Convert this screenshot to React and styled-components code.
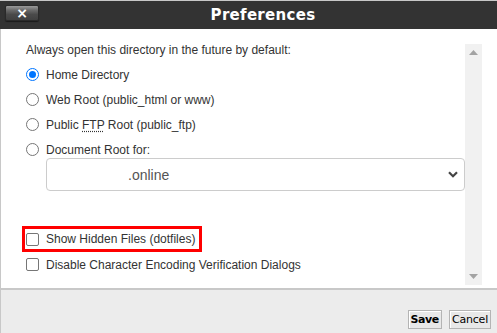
import React from "react";
import styled, { createGlobalStyle } from "styled-components";

const Global = createGlobalStyle`
  html, body { margin: 0; padding: 0; background: #fff; }
  body { font-family: "Liberation Sans", Arial, sans-serif; }
  * { box-sizing: border-box; }
`;

const Dialog = styled.div`
  width: 497px;
  height: 333px;
  display: flex;
  flex-direction: column;
  border-top: 1px solid #c8c8c8;
  overflow: hidden;
`;

const Header = styled.div`
  height: 28px;
  background: #333333;
  display: flex;
  align-items: center;
  padding: 0 0 0 5px;
  flex: none;
`;

const CloseButton = styled.button`
  width: 34px;
  height: 16px;
  margin-top: -4px;
  border: 1px solid #2a2a2a;
  border-radius: 2px;
  background: linear-gradient(#9a9a9a 0%, #6a6a6a 30%, #4a4a4a 60%, #404040 100%);
  box-shadow: 0 1px 1px rgba(0,0,0,0.5);
  color: #fff;
  font: bold 14px "DejaVu Sans", sans-serif;
  line-height: 12px;
  padding: 0;
  display: flex;
  align-items: center;
  justify-content: center;
`;

const Title = styled.div`
  flex: 1;
  text-align: center;
  padding-right: 10px;
  color: #fff;
  font: bold 15px "DejaVu Sans", Verdana, sans-serif;
  letter-spacing: 0.3px;
`;

const Body = styled.div`
  flex: 1;
  display: flex;
  border-left: 1px solid #c8c8c8;
  background: #fff;
`;

const Content = styled.div`
  flex: 1;
  padding: 14px 0 0 25px;
  color: #333;
  font-size: 12px;
`;

const Intro = styled.div`
  line-height: 15px;
  margin-bottom: 4px;
`;

const Row = styled.label`
  display: flex;
  align-items: center;
  height: 25px;
  gap: 7px;
`;

const Radio = styled.span`
  width: 13px;
  height: 13px;
  border-radius: 50%;
  border: 1px solid ${p => (p.$checked ? "#0075ff" : "#767676")};
  display: flex;
  align-items: center;
  justify-content: center;
  flex: none;
  &::after {
    content: "";
    width: 7px;
    height: 7px;
    border-radius: 50%;
    background: ${p => (p.$checked ? "#0075ff" : "transparent")};
  }
`;

const Check = styled.span`
  width: 13px;
  height: 13px;
  border-radius: 2px;
  border: 1px solid #767676;
  flex: none;
`;

const Abbr = styled.span`
  text-decoration: underline dotted;
  text-underline-offset: 2px;
`;

const Select = styled.div`
  margin: -4px 0 0 20px;
  height: 33px;
  border: 1px solid #cccccc;
  border-radius: 4px;
  display: flex;
  align-items: center;
  padding: 0 6px 0 81px;
  font-size: 14px;
  color: #555;
`;

const SelectText = styled.span`
  flex: 1;
`;

const Spacer = styled.div`
  height: ${p => p.$h}px;
`;

const Highlight = styled.div`
  margin-left: -4px;
  width: 180px;
  border: 3px solid #ff0000;
  padding-left: 1px;
`;

const HighRow = styled(Row)`
  height: 20px;
`;

const Scrollbar = styled.div`
  width: 17px;
  margin: 15px 15px 3px 0;
  background: #f1f1f1;
  display: flex;
  flex-direction: column;
  justify-content: space-between;
  align-items: center;
  padding: 6px 0;
  flex: none;
`;

const Footer = styled.div`
  height: 45px;
  flex: none;
  background: #ececec;
  border-top: 2px solid #c8c8c8;
  border-left: 1px solid #c8c8c8;
  display: flex;
  justify-content: flex-end;
  align-items: flex-start;
  padding: 20px 6px 0 0;
  gap: 7px;
`;

const Btn = styled.button`
  height: 19px;
  padding: 0 2px;
  background: #e8e8e8;
  border: 1px solid #b4b4b4;
  box-shadow: inset 1px 1px 0 #fff;
  font: ${p => (p.$bold ? "bold" : "normal")} 11px "DejaVu Sans", Tahoma, sans-serif;
  letter-spacing: ${p => (p.$bold ? "-0.4px" : "-0.2px")};
  color: #000;
  line-height: 15px;
`;

const Tri = ({ up }) => (
  <svg width="9" height="5" viewBox="0 0 9 5">
    <path d={up ? "M0 5 L4.5 0 L9 5 Z" : "M0 0 L4.5 5 L9 0 Z"} fill="#a3a3a3" />
  </svg>
);

export default function App() {
  return (
    <>
      <Global />
      <Dialog>
        <Header>
          <CloseButton>×</CloseButton>
          <Title>Preferences</Title>
        </Header>
        <Body>
          <Content>
            <Intro>Always open this directory in the future by default:</Intro>
            <Row><Radio $checked /><span>Home Directory</span></Row>
            <Row><Radio /><span>Web Root (public_html or www)</span></Row>
            <Row><Radio /><span>Public <Abbr>FTP</Abbr> Root (public_ftp)</span></Row>
            <Row><Radio /><span>Document Root for:</span></Row>
            <Select>
              <SelectText>.online</SelectText>
              <svg width="10" height="7" viewBox="0 0 10 7">
                <path d="M1 1.2 L5 5.2 L9 1.2" stroke="#444" strokeWidth="2.2" fill="none" />
              </svg>
            </Select>
            <Spacer $h={35} />
            <Highlight>
              <HighRow><Check /><span>Show Hidden Files (dotfiles)</span></HighRow>
            </Highlight>
            <Row><Check /><span>Disable Character Encoding Verification Dialogs</span></Row>
          </Content>
          <Scrollbar>
            <Tri up />
            <Tri />
          </Scrollbar>
        </Body>
        <Footer>
          <Btn $bold>Save</Btn>
          <Btn>Cancel</Btn>
        </Footer>
      </Dialog>
    </>
  );
}
